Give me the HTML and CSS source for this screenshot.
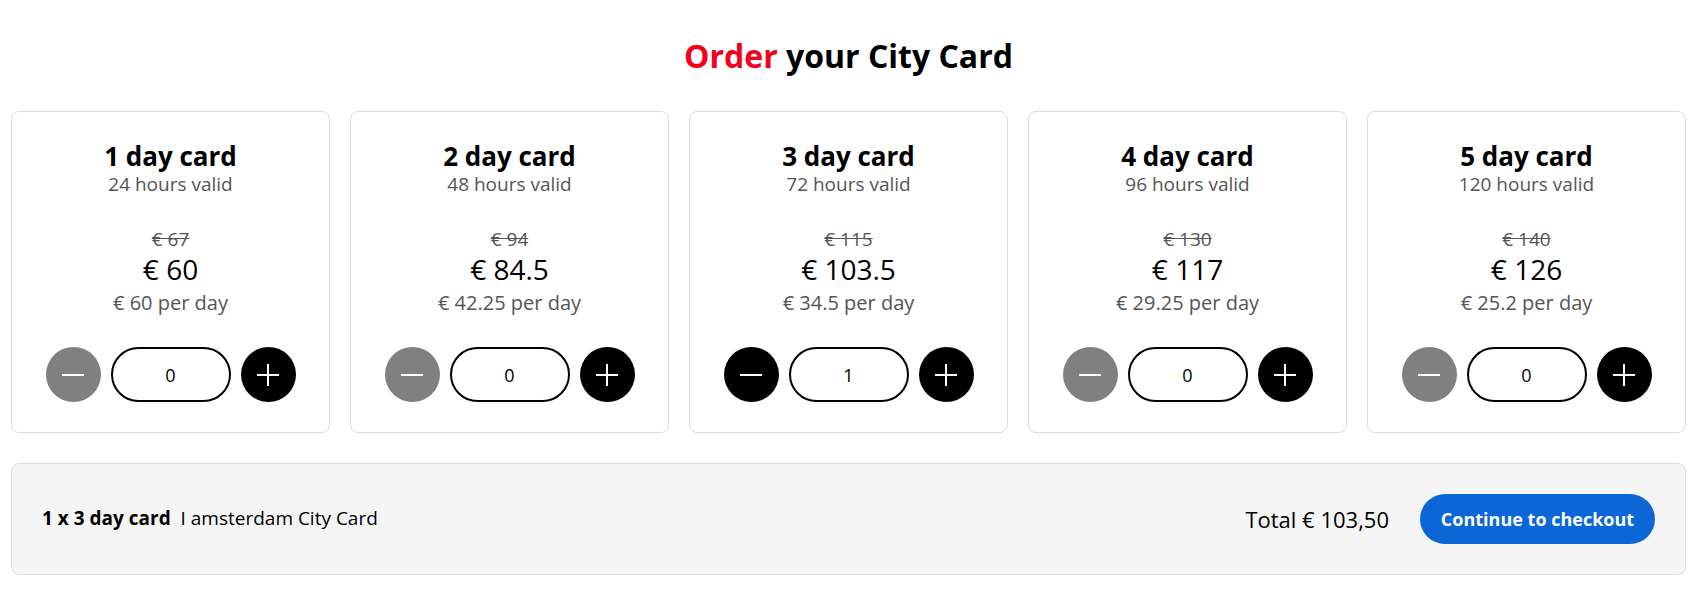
FILE: index.html
```html
<!DOCTYPE html>
<html lang="en">
<head>
<meta charset="utf-8">
<title>Order your City Card</title>
<link rel="stylesheet" href="styles.css">
</head>
<body>
<main class="page">
  <h1 class="title"><span class="accent">Order</span> your City Card</h1>
  <div class="cards">
    <section class="card">
      <h2 class="card-name">1 day card</h2>
      <p class="card-valid">24 hours valid</p>
      <p class="card-old">€ 67</p>
      <p class="card-price">€ 60</p>
      <p class="card-day">€ 60 per day</p>
      <div class="qty">
        <button class="qty-btn disabled" aria-label="minus"><svg viewBox="0 0 24 24" width="24" height="24"><path d="M1 12H23" stroke="#fff" stroke-width="2"/></svg></button>
        <div class="qty-field">0</div>
        <button class="qty-btn" aria-label="plus"><svg viewBox="0 0 24 24" width="24" height="24"><path d="M1 12H23M12 1V23" stroke="#fff" stroke-width="2"/></svg></button>
      </div>
    </section>
    <section class="card">
      <h2 class="card-name">2 day card</h2>
      <p class="card-valid">48 hours valid</p>
      <p class="card-old">€ 94</p>
      <p class="card-price">€ 84.5</p>
      <p class="card-day">€ 42.25 per day</p>
      <div class="qty">
        <button class="qty-btn disabled" aria-label="minus"><svg viewBox="0 0 24 24" width="24" height="24"><path d="M1 12H23" stroke="#fff" stroke-width="2"/></svg></button>
        <div class="qty-field">0</div>
        <button class="qty-btn" aria-label="plus"><svg viewBox="0 0 24 24" width="24" height="24"><path d="M1 12H23M12 1V23" stroke="#fff" stroke-width="2"/></svg></button>
      </div>
    </section>
    <section class="card">
      <h2 class="card-name">3 day card</h2>
      <p class="card-valid">72 hours valid</p>
      <p class="card-old">€ 115</p>
      <p class="card-price">€ 103.5</p>
      <p class="card-day">€ 34.5 per day</p>
      <div class="qty">
        <button class="qty-btn" aria-label="minus"><svg viewBox="0 0 24 24" width="24" height="24"><path d="M1 12H23" stroke="#fff" stroke-width="2"/></svg></button>
        <div class="qty-field">1</div>
        <button class="qty-btn" aria-label="plus"><svg viewBox="0 0 24 24" width="24" height="24"><path d="M1 12H23M12 1V23" stroke="#fff" stroke-width="2"/></svg></button>
      </div>
    </section>
    <section class="card">
      <h2 class="card-name">4 day card</h2>
      <p class="card-valid">96 hours valid</p>
      <p class="card-old">€ 130</p>
      <p class="card-price">€ 117</p>
      <p class="card-day">€ 29.25 per day</p>
      <div class="qty">
        <button class="qty-btn disabled" aria-label="minus"><svg viewBox="0 0 24 24" width="24" height="24"><path d="M1 12H23" stroke="#fff" stroke-width="2"/></svg></button>
        <div class="qty-field">0</div>
        <button class="qty-btn" aria-label="plus"><svg viewBox="0 0 24 24" width="24" height="24"><path d="M1 12H23M12 1V23" stroke="#fff" stroke-width="2"/></svg></button>
      </div>
    </section>
    <section class="card">
      <h2 class="card-name">5 day card</h2>
      <p class="card-valid">120 hours valid</p>
      <p class="card-old">€ 140</p>
      <p class="card-price">€ 126</p>
      <p class="card-day">€ 25.2 per day</p>
      <div class="qty">
        <button class="qty-btn disabled" aria-label="minus"><svg viewBox="0 0 24 24" width="24" height="24"><path d="M1 12H23" stroke="#fff" stroke-width="2"/></svg></button>
        <div class="qty-field">0</div>
        <button class="qty-btn" aria-label="plus"><svg viewBox="0 0 24 24" width="24" height="24"><path d="M1 12H23M12 1V23" stroke="#fff" stroke-width="2"/></svg></button>
      </div>
    </section>
  </div>
  <div class="summary">
    <p class="summary-items"><strong>1 x 3 day card</strong>&nbsp; I amsterdam City Card</p>
    <div class="summary-right">
      <span class="summary-total">Total € 103,50</span>
      <button class="checkout">Continue to checkout</button>
    </div>
  </div>
</main>
</body>
</html>
```
FILE: styles.css
```css
* { box-sizing: border-box; }
html, body { margin: 0; padding: 0; background: #fff; }
body { font-family: "Open Sans", Lato, Arial, sans-serif; color: #000; }

.page { padding: 0 12px 0 11px; }

.title {
  margin: 0;
  padding-top: 36px;
  height: 111px;
  text-align: center;
  font-size: 32px;
  line-height: 40px;
  font-weight: 700;
}
.accent { color: #f5001c; }

.cards {
  display: grid;
  grid-template-columns: repeat(5, 1fr);
  gap: 20px;
}

.card {
  border: 1px solid #dcdcdc;
  border-radius: 8px;
  padding: 30px 10px 30px;
  text-align: center;
}
.card p { margin: 0; }
.card-name { margin: 0; font-size: 26px; line-height: 28px; font-weight: 700; }
.card-valid { margin-top: 3px !important; font-size: 19px; line-height: 22px; color: #555; }
.card-old { margin-top: 33px !important; font-size: 19px; line-height: 22px; color: #555; text-decoration: line-through; }
.card-price { margin-top: 4px !important; font-size: 28px; line-height: 30px; }
.card-day { margin-top: 8px !important; font-size: 20px; line-height: 22px; color: #555; }

.qty {
  margin-top: 33px;
  display: flex;
  justify-content: center;
  gap: 10px;
}
.qty-btn {
  width: 55px; height: 55px;
  border: 0; border-radius: 50%;
  background: #000;
  padding: 0;
  display: flex; align-items: center; justify-content: center;
}
.qty-btn.disabled { background: #808080; }
.qty-field {
  width: 120px; height: 55px;
  border: 2px solid #000;
  border-radius: 28px;
  display: flex; align-items: center; justify-content: center;
  font-size: 18px;
}

.summary {
  margin-top: 30px;
  height: 112px;
  border: 1px solid #dcdcdc;
  border-radius: 8px;
  background: #f5f5f5;
  padding: 0 30px 3px;
  display: flex;
  align-items: center;
  justify-content: space-between;
}
.summary-items { margin: 0; font-size: 19px; }
.summary-items strong { font-weight: 700; }
.summary-right { display: flex; align-items: center; gap: 31px; padding-top: 3px; }
.summary-total { font-size: 22px; }
.checkout {
  width: 235px; height: 50px;
  border: 0; border-radius: 25px;
  background: #0c66d6;
  color: #fff;
  font-family: inherit;
  font-size: 18px;
  font-weight: 700;
}
```
